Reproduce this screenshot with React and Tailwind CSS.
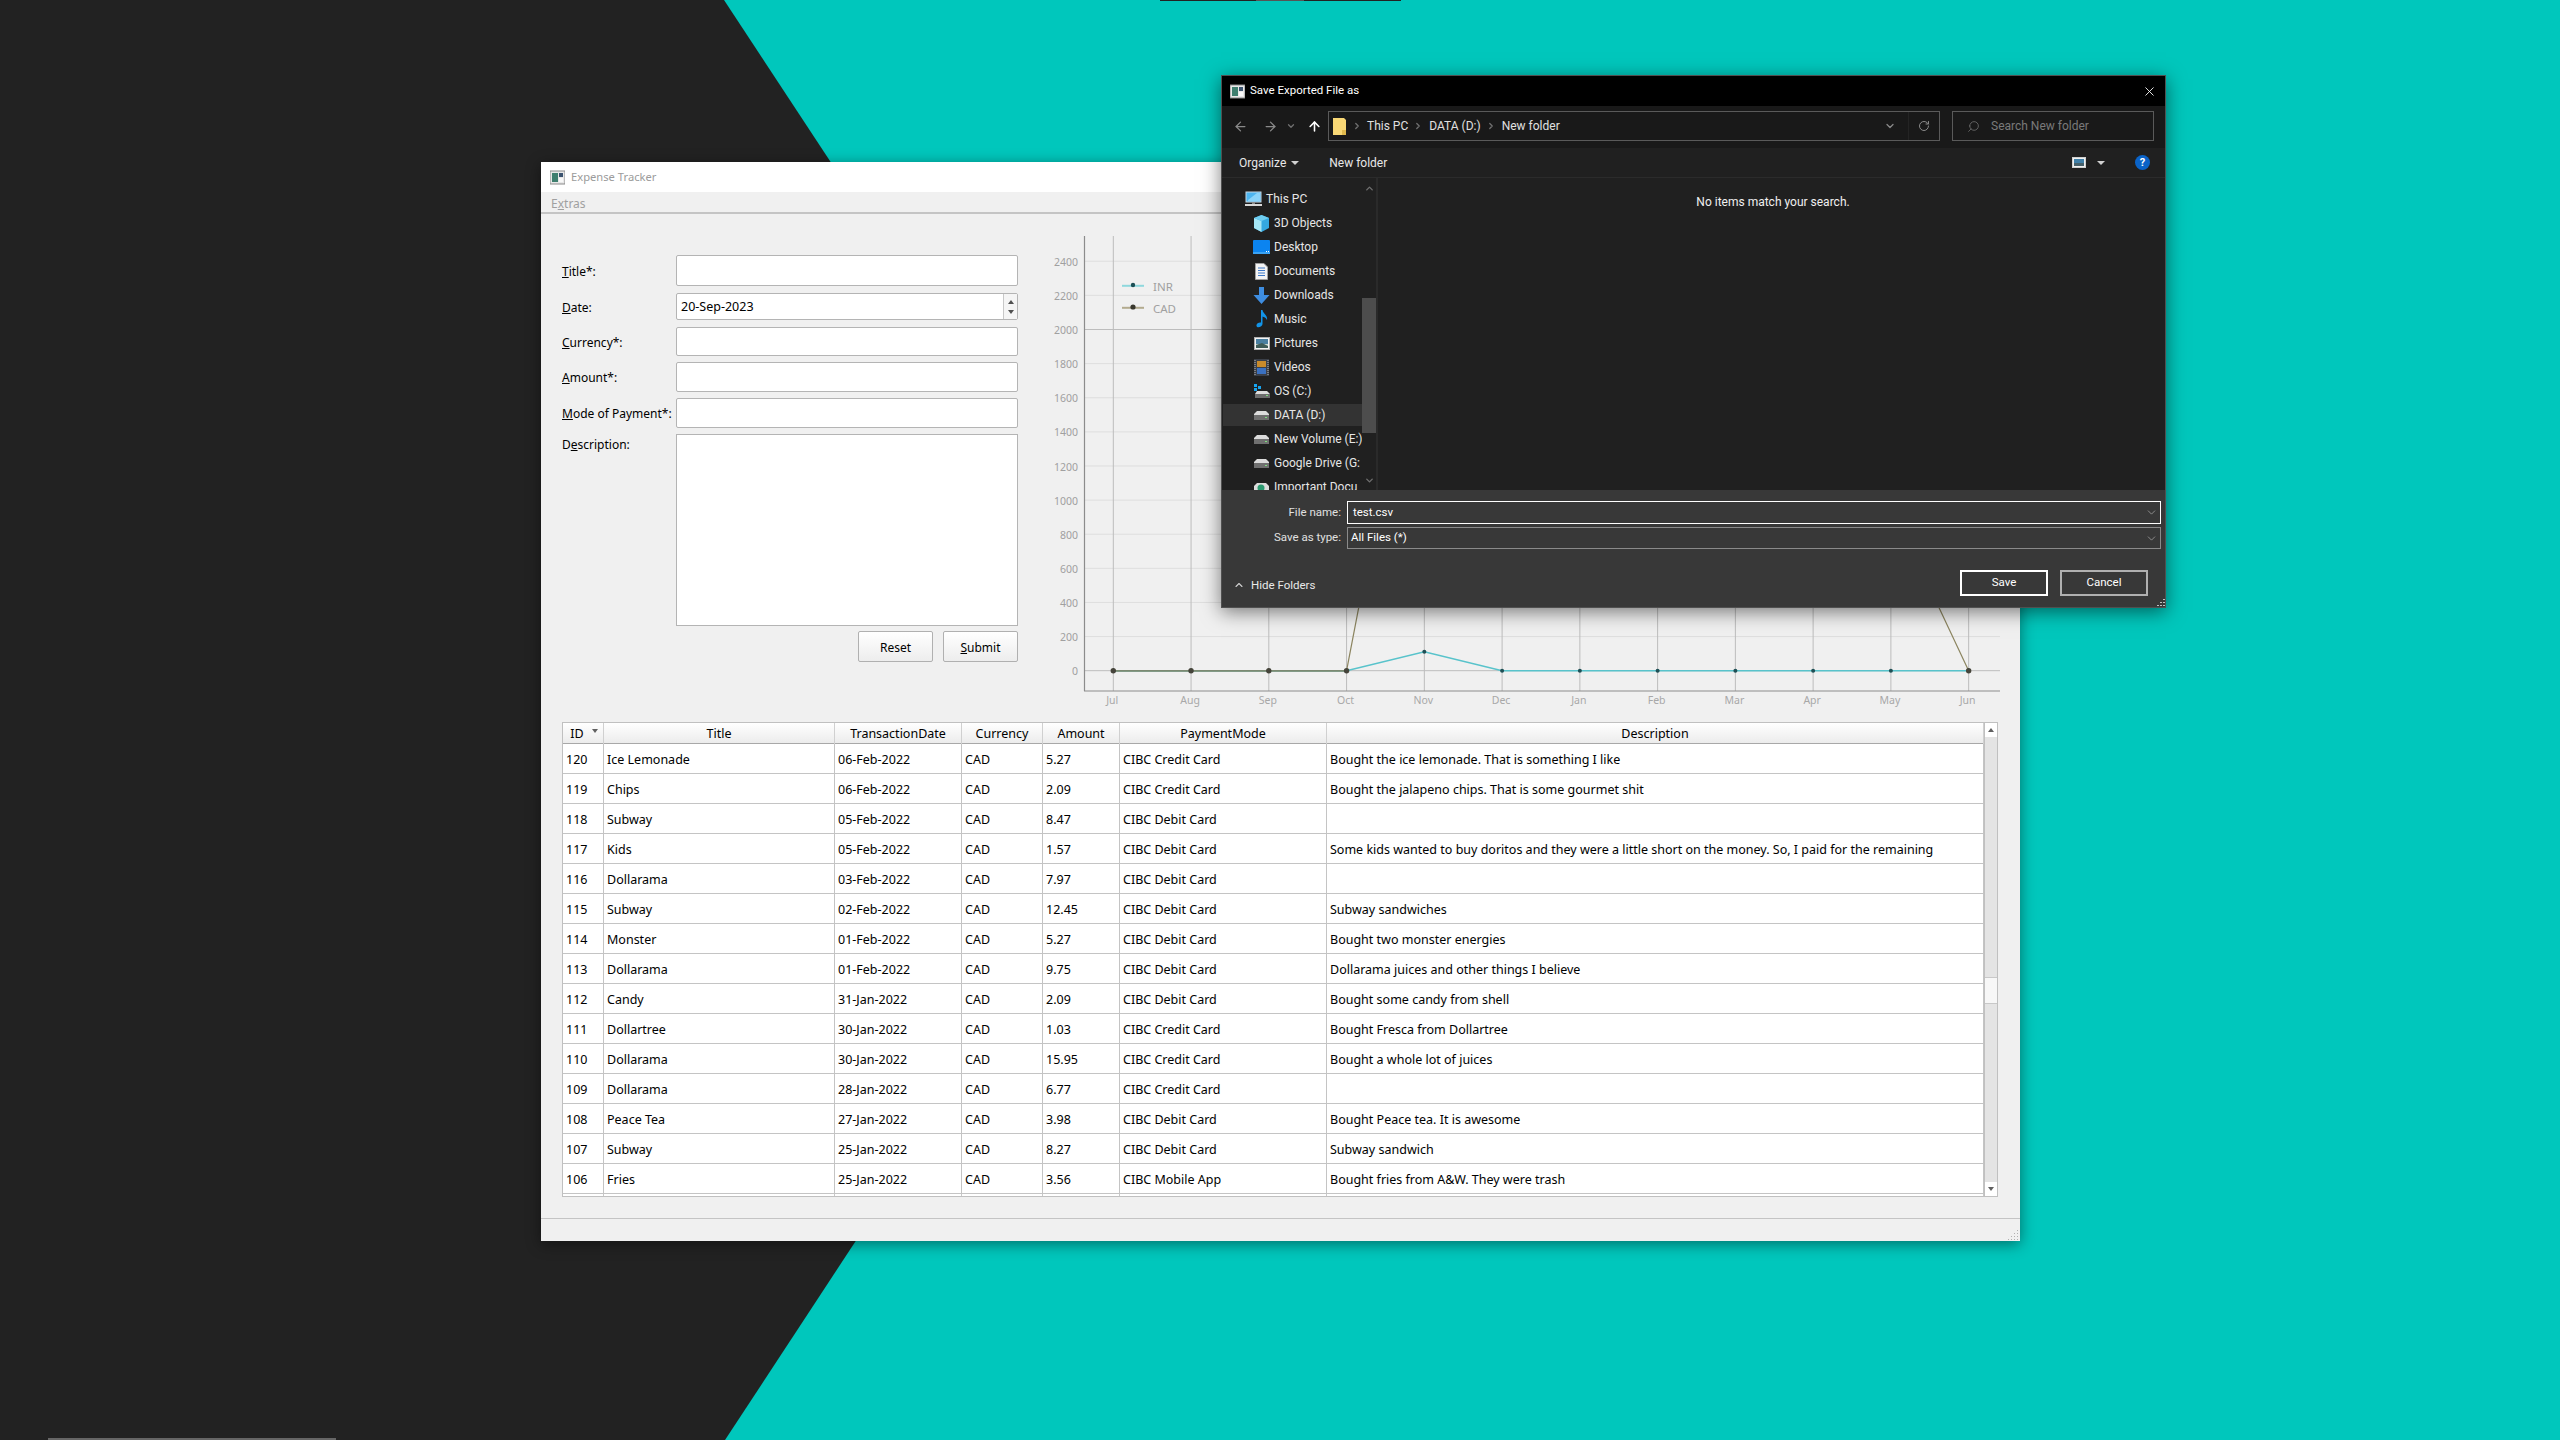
import React from "react";
import { ArrowLeft, ArrowRight, ArrowUp, ChevronDown, ChevronRight, ChevronUp, RotateCw, Search, X } from "lucide-react";

const rows = [
  ["120","Ice Lemonade","06-Feb-2022","CAD","5.27","CIBC Credit Card","Bought the ice lemonade. That is something I like"],
  ["119","Chips","06-Feb-2022","CAD","2.09","CIBC Credit Card","Bought the jalapeno chips. That is some gourmet shit"],
  ["118","Subway","05-Feb-2022","CAD","8.47","CIBC Debit Card",""],
  ["117","Kids","05-Feb-2022","CAD","1.57","CIBC Debit Card","Some kids wanted to buy doritos and they were a little short on the money. So, I paid for the remaining"],
  ["116","Dollarama","03-Feb-2022","CAD","7.97","CIBC Debit Card",""],
  ["115","Subway","02-Feb-2022","CAD","12.45","CIBC Debit Card","Subway sandwiches"],
  ["114","Monster","01-Feb-2022","CAD","5.27","CIBC Debit Card","Bought two monster energies"],
  ["113","Dollarama","01-Feb-2022","CAD","9.75","CIBC Debit Card","Dollarama juices and other things I believe"],
  ["112","Candy","31-Jan-2022","CAD","2.09","CIBC Debit Card","Bought some candy from shell"],
  ["111","Dollartree","30-Jan-2022","CAD","1.03","CIBC Credit Card","Bought Fresca from Dollartree"],
  ["110","Dollarama","30-Jan-2022","CAD","15.95","CIBC Credit Card","Bought a whole lot of juices"],
  ["109","Dollarama","28-Jan-2022","CAD","6.77","CIBC Credit Card",""],
  ["108","Peace Tea","27-Jan-2022","CAD","3.98","CIBC Debit Card","Bought Peace tea. It is awesome"],
  ["107","Subway","25-Jan-2022","CAD","8.27","CIBC Debit Card","Subway sandwich"],
  ["106","Fries","25-Jan-2022","CAD","3.56","CIBC Mobile App","Bought fries from A&W. They were trash"],
];
const headers = ["ID","Title","TransactionDate","Currency","Amount","PaymentMode","Description"];
const gridCols = "grid grid-cols-[41px_231px_127px_81px_77px_207px_657px]";

function AppIcon() {
  return (
    <svg width="15" height="15" viewBox="0 0 15 15" className="shrink-0">
      <rect x="0" y="1" width="15" height="13" fill="#e8e8e8" stroke="#8a8a8a" />
      <rect x="2" y="3" width="6" height="9" fill="#3f7f6f" />
      <rect x="9" y="3" width="4" height="4" fill="#3c5470" />
      <rect x="9" y="8" width="4" height="4" fill="#f8f8f8" />
    </svg>
  );
}

function Label({ u, post }) {
  return (
    <span className="w-[114px] shrink-0 pt-[2px] text-black whitespace-nowrap">
      <span className="underline">{u}</span>{post}
    </span>
  );
}

function Chart() {
  const months = ["Jul","Aug","Sep","Oct","Nov","Dec","Jan","Feb","Mar","Apr","May","Jun"];
  const xAt = (i) => 1113.3 + i * 77.76;
  const yAt = (v) => 670.7 - (v / 200) * 34.12;
  const inr = [0,0,0,0,111,0,0,0,0,0,0,0];
  const cad = [0,0,0,0,2370,1200,1500,1300,1100,1400,970,0];
  const ticks = [0,200,400,600,800,1000,1200,1400,1600,1800,2000,2200,2400];
  const pts = (a) => a.map((v, i) => `${xAt(i)},${yAt(v)}`).join(" ");
  return (
    <svg width="970" height="508" viewBox="1040 214 970 508" className="shrink-0 text-[10.5px] font-['Noto_Sans',sans-serif]">
      {ticks.map((t) => (
        <g key={t}>
          <line x1="1084" x2="2000" y1={yAt(t)} y2={yAt(t)} stroke={t === 2000 || t === 0 ? "#bdbdbd" : "#dedede"} />
          <text x="1078" y={yAt(t) + 4.6} textAnchor="end" fill="#a0a0a0">{t}</text>
        </g>
      ))}
      {months.map((m, i) => (
        <g key={m}>
          <line x1={xAt(i)} x2={xAt(i)} y1="236" y2="691" stroke="#bcbcbc" />
          <text x={xAt(i) - 1} y="704" textAnchor="middle" fill="#a8a8a8">{m}</text>
        </g>
      ))}
      <line x1="1084.5" x2="1084.5" y1="236" y2="691" stroke="#8c8c8c" strokeWidth="1.2" />
      <line x1="1084" x2="2000" y1="691" y2="691" stroke="#8c8c8c" strokeWidth="1.2" />
      <polyline points={pts(cad)} fill="none" stroke="#8c8560" strokeWidth="1.2" />
      <polyline points={pts(inr)} fill="none" stroke="#58c3cb" strokeWidth="1.6" />
      <line x1={xAt(0)} x2={xAt(3)} y1="670.9" y2="670.9" stroke="#7c8a72" strokeWidth="1.8" />
      {inr.map((v, i) => <circle key={i} cx={xAt(i)} cy={yAt(v)} r="2" fill="#1f4f55" />)}
      {cad.map((v, i) => (v === 0 && (i < 4 || i === 11)) ? <circle key={i} cx={xAt(i)} cy={yAt(v)} r="2.7" fill="#45443a" /> : null)}
      <line x1="1122" x2="1144" y1="285.8" y2="285.8" stroke="#8fd8dd" strokeWidth="2" />
      <circle cx="1133" cy="285" r="2.2" fill="#1d4f55" />
      <text x="1153" y="291" fill="#a0a0a0" className="text-[11.5px]">INR</text>
      <line x1="1122" x2="1144" y1="307.8" y2="307.8" stroke="#b3ab8f" strokeWidth="2" />
      <circle cx="1133" cy="307" r="2.6" fill="#3a392f" />
      <text x="1153" y="313" fill="#a0a0a0" className="text-[11.5px]">CAD</text>
    </svg>
  );
}

function ExpenseWindow() {
  const input = "flex-1 border border-[#b4b4b4] rounded-[2px] bg-white";
  return (
    <div className="absolute left-[541px] top-[162px] w-[1479px] h-[1079px] flex flex-col bg-[#f0f0f0] shadow-[0_3px_14px_rgba(0,0,0,0.45)] text-[12px] text-black font-['Noto_Sans',sans-serif]">
      <div className="h-[30px] shrink-0 bg-white flex items-center pl-[9px] gap-[6px] text-[#9b9b9b] text-[11.2px]">
        <AppIcon />
        <span>Expense Tracker</span>
      </div>
      <div className="h-[22px] shrink-0 border-b-2 border-[#c4c4c4] pl-[10px] pt-[3px] flex items-center text-[#a0a0a0] text-[12px]">
        <span>E<span className="underline">x</span>tras</span>
      </div>
      <div className="h-[508px] shrink-0 flex">
        <div className="w-[499px] shrink-0 pl-[21px] pr-[22px] pt-[41px] flex flex-col">
          <div className="flex items-center h-[31px]"><Label u="T" post="itle*:" /><div className={`${input} h-full`} /></div>
          <div className="flex items-center h-[27px] mt-[7px]">
            <Label u="D" post="ate:" />
            <div className={`${input} h-full flex items-center pl-[4px] text-[12.5px]`}>
              <span className="flex-1 pt-[2px]">20-Sep-2023</span>
              <div className="w-[14px] h-full border-l border-[#c8c8c8] flex flex-col items-center justify-center gap-[6px] bg-[#f5f5f5]">
                <div className="w-0 h-0 border-x-[3.5px] border-x-transparent border-b-[4px] border-b-[#505050]" />
                <div className="w-0 h-0 border-x-[3.5px] border-x-transparent border-t-[4px] border-t-[#505050]" />
              </div>
            </div>
          </div>
          <div className="flex items-center h-[29px] mt-[7px]"><Label u="C" post="urrency*:" /><div className={`${input} h-full`} /></div>
          <div className="flex items-center h-[30px] mt-[6px]"><Label u="A" post="mount*:" /><div className={`${input} h-full`} /></div>
          <div className="flex items-center h-[30px] mt-[6px]"><Label u="M" post="ode of Payment*:" /><div className={`${input} h-full`} /></div>
          <div className="flex items-start h-[192px] mt-[6px]">
            <span className="w-[114px] shrink-0 mt-[2px]">D<span className="underline">e</span>scription:</span>
            <div className="flex-1 h-full border border-[#b4b4b4] bg-white" />
          </div>
          <div className="flex justify-end gap-[10px] mt-[5px]">
            <div className="w-[75px] h-[31px] pt-[2px] flex items-center justify-center border border-[#b0b0b0] rounded-[2px] bg-gradient-to-b from-white to-[#ededed]">Reset</div>
            <div className="w-[75px] h-[31px] pt-[2px] flex items-center justify-center border border-[#b0b0b0] rounded-[2px] bg-gradient-to-b from-white to-[#ededed]"><span><span className="underline">S</span>ubmit</span></div>
          </div>
        </div>
        <Chart />
      </div>
      <div className="ml-[21px] w-[1436px] h-[475px] shrink-0 flex border border-[#c0c0c0] bg-white overflow-hidden text-[12.5px]">
        <div className="w-[1421px] shrink-0 flex flex-col">
          <div className={`${gridCols} h-[21px] shrink-0 border-b border-[#a8a8a8] bg-gradient-to-b from-white to-[#ececec]`}>
            {headers.map((h, i) => (
              <div key={h} className="relative border-r border-[#d0d0d0] flex items-center justify-center pt-[2px]">
                <span className={i === 0 ? "mr-[12px]" : ""}>{h}</span>
                {i === 0 && <div className="absolute right-[5px] top-[6px] w-0 h-0 border-x-[3px] border-x-transparent border-t-[4px] border-t-[#606060]" />}
              </div>
            ))}
          </div>
          {rows.map((r) => (
            <div key={r[0]} className={`${gridCols} h-[30px] shrink-0`}>
              {r.map((c, i) => (
                <div key={i} className="border-r border-b border-[#c4c4c4] pl-[3px] pt-[3px] flex items-center whitespace-nowrap overflow-hidden">{c}</div>
              ))}
            </div>
          ))}
          <div className={`${gridCols} flex-1`}>
            {headers.map((h) => <div key={h} className="border-r border-[#c8c8c8]" />)}
          </div>
        </div>
        <div className="flex-1 flex flex-col border-l border-[#c0c0c0] bg-[#e4e4e4]">
          <div className="h-[14px] bg-white flex items-center justify-center shrink-0">
            <div className="w-0 h-0 border-x-[3.5px] border-x-transparent border-b-[4px] border-b-[#606060]" />
          </div>
          <div className="mt-[240px] h-[27px] bg-[#f7f7f7] border-y border-[#c8c8c8] shrink-0" />
          <div className="flex-1" />
          <div className="h-[14px] bg-white flex items-center justify-center shrink-0">
            <div className="w-0 h-0 border-x-[3.5px] border-x-transparent border-t-[4px] border-t-[#606060]" />
          </div>
        </div>
      </div>
      <div className="flex-1" />
      <div className="relative h-[23px] shrink-0 border-t border-[#c4c4c4]">
        <svg width="12" height="12" viewBox="0 0 12 12" className="absolute right-[1px] bottom-[1px]">
          {[[10,2],[10,5],[10,8],[10,11],[7,5],[7,8],[7,11],[4,8],[4,11],[1,11]].map(([x,y],i) => <rect key={i} x={x} y={y} width="1" height="1" fill="#b0b0b0" />)}
        </svg>
      </div>
    </div>
  );
}

const I = {
  pc: <svg width="17" height="16" viewBox="0 0 17 16"><rect x="1" y="1" width="15" height="10" fill="#4db5f0" stroke="#c8d8e4" /><path d="M3 9 L12 2 H15 V10 H3Z" fill="#8bd4fa" /><rect x="7" y="11" width="3" height="2" fill="#8a8a8a" /><rect x="0" y="13" width="17" height="2" fill="#d8d8d8" /></svg>,
  cube: <svg width="17" height="17" viewBox="0 0 17 17"><path d="M8.5 0 L16 3 V13 L8.5 17 L1 13 V3Z" fill="#35a8e0" /><path d="M1 3 L8.5 6 V17 L1 13Z" fill="#a5e6f5" /><path d="M8.5 0 L16 3 L8.5 6 L1 3Z" fill="#6fcdf0" /></svg>,
  desk: <svg width="17" height="14" viewBox="0 0 17 14"><rect x="0" y="0" width="17" height="13" rx="1" fill="#0b84f0" /><rect x="0" y="12" width="17" height="2" fill="#3aa3f5" /><rect x="13" y="11" width="1" height="1" fill="#fff" /><rect x="15" y="11" width="1" height="1" fill="#fff" /></svg>,
  doc: <svg width="13" height="17" viewBox="0 0 13 17"><path d="M0.5 0.5 H9 L12.5 4 V16.5 H0.5Z" fill="#f4f4f4" stroke="#a0a0a0" /><path d="M3 5 H10 M3 7.5 H10 M3 10 H10 M3 12.5 H10" stroke="#3c78c8" /></svg>,
  down: <svg width="17" height="17" viewBox="0 0 17 17"><path d="M6 0 H11 V8 H16.5 L8.5 17 L0.5 8 H6Z" fill="#3e8de0" /></svg>,
  music: <svg width="12" height="18" viewBox="0 0 12 18"><path d="M5 0 H6.5 C7 4 12 5 11 10 C10 7.5 8 7 6.5 6.5 V14 C6.5 17 1 18.5 0.5 16 C0 13.5 3 12 5 12.5Z" fill="#1294e8" /></svg>,
  pic: <svg width="16" height="13" viewBox="0 0 16 13"><rect x="0.5" y="0.5" width="15" height="12" fill="#f4f4f4" stroke="#b0b0b0" /><rect x="2" y="2" width="12" height="5" fill="#4a7fa0" /><rect x="2" y="7" width="12" height="4" fill="#c8d8d0" /><path d="M2 8 L8 6 L14 9 V11 H2Z" fill="#3f5c58" /></svg>,
  vid: <svg width="15" height="17" viewBox="0 0 15 17"><rect x="0" y="0" width="15" height="17" fill="#3a3f48" /><rect x="3" y="2" width="9" height="6" fill="#c88a2a" /><rect x="3" y="9" width="9" height="6" fill="#3a70c0" /><path d="M1 1 V16 M14 1 V16" stroke="#bbb" strokeDasharray="1 1" /></svg>,
  os: <svg width="16" height="14" viewBox="0 0 16 14"><rect x="0" y="0" width="3" height="3" fill="#18a4f0" /><rect x="4" y="2" width="3" height="3" fill="#18a4f0" /><rect x="0" y="4" width="3" height="3" fill="#18a4f0" /><path d="M3 7 H13 L16 10 V14 H1 V10Z" fill="#dcdcdc" /><rect x="1" y="10" width="15" height="4" fill="#6d6d6d" /><rect x="12" y="11" width="2" height="1" fill="#7ee07e" /></svg>,
  drive: <svg width="15" height="9" viewBox="0 0 15 9"><path d="M3 0 H12 L15 3 V9 H0 V3Z" fill="#dcdcdc" /><rect x="0" y="4" width="15" height="5" fill="#707070" /><rect x="11" y="6" width="2" height="1" fill="#7ee07e" /></svg>,
  net: <svg width="15" height="9" viewBox="0 0 15 9"><path d="M3 0 H12 L15 3 V9 H0 V3Z" fill="#dcdcdc" /><circle cx="7" cy="5" r="3.5" fill="#2c9a70" /></svg>,
};

const tree = [
  ["This PC", I.pc, 0],["3D Objects", I.cube, 1],["Desktop", I.desk, 1],["Documents", I.doc, 1],["Downloads", I.down, 1],["Music", I.music, 1],
  ["Pictures", I.pic, 1],["Videos", I.vid, 1],["OS (C:)", I.os, 1],["DATA (D:)", I.drive, 1],["New Volume (E:)", I.drive, 1],["Google Drive (G:", I.drive, 1],["Important Docu", I.net, 1],
];

function SaveDialog() {
  return (
    <div className="absolute left-[1221px] top-[75px] w-[945px] h-[533px] flex flex-col bg-[#202020] border border-[#505050] shadow-[0_4px_18px_rgba(0,0,0,0.5)] text-[12px] text-[#e8e8e8] font-['Roboto',sans-serif]">
      <div className="h-[30px] shrink-0 bg-black flex items-center pl-[8px] pr-[8px]">
        <AppIcon />
        <span className="ml-[5px] text-white text-[11.5px]">Save Exported File as</span>
        <X className="ml-auto text-white" size={15} strokeWidth={1.4} />
      </div>
      <div className="h-[42px] shrink-0 bg-[#191919] flex items-center pb-[2px] text-[#e0e0e0]">
        <ArrowLeft className="ml-[11px] text-[#8a8a8a]" size={15} strokeWidth={2} />
        <ArrowRight className="ml-[15px] text-[#8a8a8a]" size={15} strokeWidth={2} />
        <ChevronDown className="ml-[8px] text-[#707070]" size={10} strokeWidth={3} />
        <ArrowUp className="ml-[11px] text-white" size={15} strokeWidth={2.5} />
        <div className="ml-[6px] w-[612px] h-[30px] border border-[#5a5a5a] flex items-center">
          <svg width="14" height="17" viewBox="0 0 14 17" className="ml-[4px]"><path d="M0 0 H11 L13 2 V17 H0Z" fill="#f8d775" /><path d="M9 12 H13 V17 H9Z" fill="#e0b94d" /></svg>
          <ChevronRight className="ml-[5px] text-[#707070]" size={10} strokeWidth={3} />
          <span className="ml-[5px]">This PC</span>
          <ChevronRight className="ml-[5px] text-[#707070]" size={10} strokeWidth={3} />
          <span className="ml-[6px]">DATA (D:)</span>
          <ChevronRight className="ml-[5px] text-[#707070]" size={10} strokeWidth={3} />
          <span className="ml-[6px]">New folder</span>
          <ChevronDown className="ml-auto mr-[12px] text-[#8a8a8a]" size={12} strokeWidth={2.5} />
          <div className="h-full border-l border-[#242424]" />
          <RotateCw className="mx-[9px] text-[#8a8a8a]" size={12} strokeWidth={2} />
        </div>
        <div className="ml-[12px] w-[202px] h-[30px] border border-[#5a5a5a] flex items-center text-[#7a7a7a]">
          <Search className="ml-[14px] -scale-x-100 text-[#6f6f6f]" size={13} strokeWidth={1.5} />
          <span className="ml-[11px]">Search New folder</span>
        </div>
      </div>
      <div className="h-[30px] shrink-0 flex items-center border-b border-[#2b2b2b]">
        <span className="ml-[17px]">Organize</span>
        <div className="ml-[5px] w-0 h-0 border-x-[4px] border-x-transparent border-t-[4px] border-t-[#d0d0d0]" />
        <span className="ml-[30px]">New folder</span>
        <svg width="14" height="11" viewBox="0 0 14 11" className="ml-auto"><rect x="0.5" y="0.5" width="13" height="10" fill="#f0f0f0" stroke="#d0d0d0" /><rect x="2" y="2" width="10" height="4" fill="#3f7fa8" /><rect x="2" y="6" width="10" height="3" fill="#46606a" /></svg>
        <div className="ml-[11px] w-0 h-0 border-x-[4px] border-x-transparent border-t-[4px] border-t-[#d0d0d0]" />
        <div className="ml-[30px] mr-[15px] w-[15px] h-[15px] rounded-full bg-[#0a63c8] flex items-center justify-center text-white text-[11px] font-bold leading-none">?</div>
      </div>
      <div className="h-[312px] shrink-0 flex">
        <div className="w-[156px] shrink-0 flex border-r-2 border-[#2a2a2a]">
          <div className="w-[140px] shrink-0 pt-[9px] overflow-hidden">
            {tree.map(([t, ic, lvl]) => (
              <div key={t} className="h-[24px] flex items-center relative">
                {t === "DATA (D:)" && <div className="absolute left-[1px] right-[0px] top-[1px] bottom-[1px] bg-[#333333]" />}
                <div className={`relative w-[17px] flex items-center justify-center shrink-0 ${lvl ? "ml-[31px]" : "ml-[23px]"}`}>{ic}</div>
                <span className={`relative whitespace-nowrap text-[#e6e6e6] ${lvl ? "ml-[4px]" : "ml-[4px]"}`}>{t}</span>
              </div>
            ))}
          </div>
          <div className="w-[14px] shrink-0 flex flex-col items-center">
            <ChevronUp className="mt-[5px] text-[#6f6f6f]" size={11} strokeWidth={3} />
            <div className="mt-[104px] w-full h-[135px] bg-[#4d4d4d]" />
            <ChevronDown className="mt-[42px] text-[#6f6f6f]" size={11} strokeWidth={3} />
          </div>
        </div>
        <div className="flex-1 pt-[15px] pl-[3px] text-center text-[#f0f0f0]">No items match your search.</div>
      </div>
      <div className="flex-1 bg-[#383838] flex flex-col relative text-[11.5px]">
        <div className="mt-[11px] flex items-center h-[23px]">
          <span className="w-[119px] text-right text-[#e0e0e0]">File name:</span>
          <div className="ml-[6px] w-[814px] h-full border border-white flex items-center pl-[5px] text-white">
            <span>test.csv</span>
            <ChevronDown className="ml-auto mr-[2px] text-[#b8b8b8]" size={13} strokeWidth={1.2} />
          </div>
        </div>
        <div className="mt-[3px] flex items-center h-[22px]">
          <span className="w-[119px] text-right text-[#e0e0e0]">Save as type:</span>
          <div className="ml-[6px] w-[814px] h-full border border-[#8a8a8a] flex items-center pl-[3px] text-white">
            <span>All Files (*)</span>
            <ChevronDown className="ml-auto mr-[2px] text-[#b8b8b8]" size={13} strokeWidth={1.2} />
          </div>
        </div>
        <div className="mt-[21px] flex items-center h-[26px]">
          <ChevronUp className="ml-[11px] mt-[3px] text-[#d0d0d0]" size={12} strokeWidth={2.2} />
          <span className="ml-[6px] mt-[5px] text-[#e8e8e8]">Hide Folders</span>
          <div className="ml-auto -mt-[1px] w-[88px] h-[26px] border-2 border-white flex items-center justify-center text-white">Save</div>
          <div className="ml-[12px] -mt-[1px] mr-[17px] w-[88px] h-[26px] border-2 border-[#b0b0b0] flex items-center justify-center text-white">Cancel</div>
        </div>
        <svg width="9" height="9" viewBox="0 0 9 9" className="absolute right-0 bottom-0">
          {[[7,1],[7,4],[7,7],[4,4],[4,7],[1,7]].map(([x,y],i) => <rect key={i} x={x} y={y} width="2" height="1" fill="#c0c0c0" />)}
        </svg>
      </div>
    </div>
  );
}

export default function App() {
  return (
    <div className="relative w-[2560px] h-[1440px] overflow-hidden bg-[#00c7bc]">
      <svg width="2560" height="1440" viewBox="0 0 2560 1440" className="absolute inset-0">
        <polygon points="0,0 724,0 1198,720 725,1440 0,1440" fill="#222222" />
      </svg>
      <div className="absolute left-[1160px] top-0 w-[241px] h-px bg-[#222222]">
        <div className="ml-[96px] w-[48px] h-full bg-[#555555]" />
      </div>
      <div className="absolute left-[48px] bottom-0 w-[288px] h-[2px] bg-[#666666]" />
      <ExpenseWindow />
      <SaveDialog />
    </div>
  );
}
